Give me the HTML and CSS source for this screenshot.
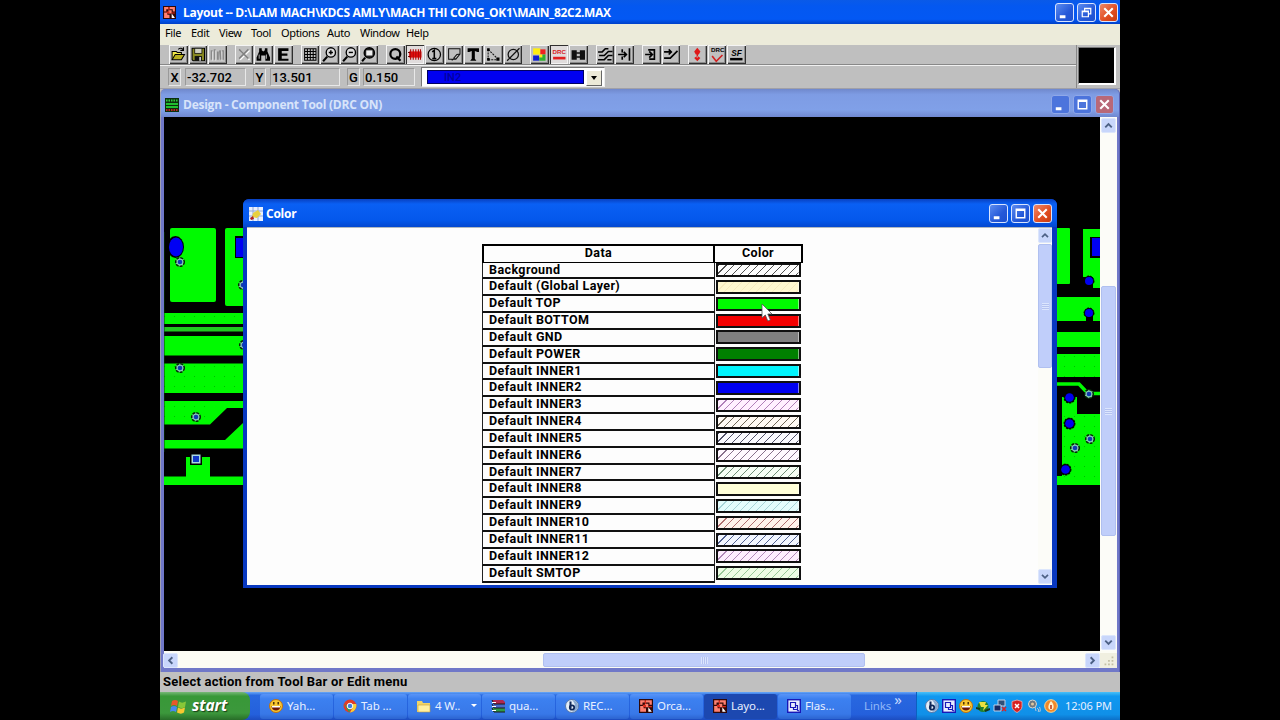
FILE: index.html
```html
<!DOCTYPE html>
<html lang="en">
<head>
    <meta charset="UTF-8">
    <title>Layout</title>
    <link rel="stylesheet" href="styles.css">
</head>
<body>
<!-- shared icons -->
<svg width="0" height="0" class="defs">
    <defs>
        <symbol id="orcad" viewBox="0 0 12 12">
            <rect width="12" height="12" fill="#300808"/>
            <path d="M1 1h4v2H3v2H1zM6 1h5v4H9V3H6zM1 6h3v2h2v3H1zM5 4h3v3H5z" fill="#ff8070"/>
            <path d="M3 5h3v2H4zM8 6h3v1H8zM5 1h1v3H5z" fill="#e02818"/>
            <path d="M8 7l3 4H8z" fill="#fff"/>
        </symbol>
        <symbol id="smile" viewBox="0 0 14 14">
            <circle cx="7" cy="7" r="6.5" fill="#f8c830" stroke="#c07010"/>
            <path d="M2.500 7h9c0 6-9 6-9 0z" fill="#701808"/>
            <path d="M3 7h8v1.500H3z" fill="#fff"/>
            <path d="M4.800 3v2.500M9.200 3v2.500" stroke="#301800" stroke-width="1.300"/>
        </symbol>
        <symbol id="bball" viewBox="0 0 14 14">
            <circle cx="7" cy="7" r="6.500" fill="#e4eef8" stroke="#5878a8"/>
            <path d="M7 1a6 6 0 0 1 0 12c4-3 4-8 0-12z" fill="#88a8d0"/>
            <path d="M5.500 2.500v7" stroke="#102858" stroke-width="2"/>
            <circle cx="7" cy="8.500" r="2.200" fill="none" stroke="#102858" stroke-width="1.800"/>
        </symbol>
        <symbol id="flash" viewBox="0 0 14 14">
            <rect x=".7" y=".7" width="12.600" height="12.600" fill="#e8ecff" stroke="#1818b8" stroke-width="1.400"/>
            <path d="M3.500 3.500h5v5h-5zM8.500 6.500h2v4h-4v-2M10 11l2 1" fill="none" stroke="#1818b8" stroke-width="1.200"/>
        </symbol>
        <symbol id="min" viewBox="0 0 18 18"><path d="M4 12h6v3H4z" fill="#fff"/></symbol>
        <symbol id="max" viewBox="0 0 18 18"><path d="M4.500 4.500h9v9h-9zM4 5.500h10" fill="none" stroke="#fff" stroke-width="1.500"/></symbol>
        <symbol id="restore" viewBox="0 0 18 18"><path d="M7 7V4.500h6.500v6H11M4.500 7.500h6.500v6H4.500zM7 5h6.500M4.500 8h6.500" fill="none" stroke="#fff" stroke-width="1.300"/></symbol>
        <symbol id="close" viewBox="0 0 18 18"><path d="M4.500 4.500l9 9M13.500 4.500l-9 9" stroke="#fff" stroke-width="2.200"/></symbol>
        <symbol id="up" viewBox="0 0 14 14"><path d="M3.500 9L7 5.500 10.500 9" fill="none" stroke="#4d6185" stroke-width="2"/></symbol>
        <symbol id="down" viewBox="0 0 14 14"><path d="M3.500 5L7 8.500 10.500 5" fill="none" stroke="#4d6185" stroke-width="2"/></symbol>
        <symbol id="left" viewBox="0 0 14 14"><path d="M9 3.500L5.500 7 9 10.500" fill="none" stroke="#4d6185" stroke-width="2"/></symbol>
        <symbol id="right" viewBox="0 0 14 14"><path d="M5 3.500L8.500 7 5 10.500" fill="none" stroke="#4d6185" stroke-width="2"/></symbol>
        <symbol id="pad" viewBox="0 0 12 12">
            <circle cx="6" cy="6" r="4.300" fill="#88c8b8" stroke="#042804" stroke-width="1.500" stroke-dasharray="3 1"/>
            <circle cx="6" cy="6" r="2.300" fill="#1038b0"/>
        </symbol>
        <symbol id="blob" viewBox="0 0 12 12">
            <circle cx="6" cy="6" r="5" fill="#000" stroke="#000" stroke-dasharray="2 1"/>
            <circle cx="6" cy="6" r="4" fill="#0000f0"/>
        </symbol>
        <pattern id="dots" width="10" height="10" patternUnits="userSpaceOnUse"><rect x="4" y="6" width="1" height="1" fill="#00c000"/></pattern>
    </defs>
</svg>

<div class="screen">
    <div class="titlebar">
        <svg class="app-icon"><use href="#orcad"/></svg>
        <span class="title">Layout -- D:\LAM MACH\KDCS AMLY\MACH THI CONG_OK1\MAIN_82C2.MAX</span>
        <div class="controls">
            <svg class="ctl"><use href="#min"/></svg>
            <svg class="ctl"><use href="#restore"/></svg>
            <svg class="ctl red"><use href="#close"/></svg>
        </div>
    </div>

    <div class="menu">
        <span class="m-file">File</span><span class="m-edit">Edit</span><span class="m-view">View</span><span class="m-tool">Tool</span><span class="m-options">Options</span><span class="m-auto">Auto</span><span class="m-window">Window</span><span>Help</span>
    </div>

    <div class="tools">
        <div class="tool-rows">
            <div class="toolbar">
                <div class="group">
                    <svg class="btn" viewBox="0 0 18 18"><path d="M3 14V6h4l1 1h4v2" fill="#f0e848" stroke="#000"/><path d="M3 14l3-5h9l-3 5z" fill="#b8b020" stroke="#000"/><path d="M9 4c2-2 4-1 5 1M14 2v3h-3" fill="none" stroke="#000"/></svg>
                    <svg class="btn" viewBox="0 0 18 18"><path d="M3 3h12v12H4l-1-1z" fill="#888820" stroke="#000"/><path d="M5.500 3h7v5h-7z" fill="#d0d0c0" stroke="#000" stroke-width=".7"/><path d="M5.500 10.500h7V15h-7z" fill="#111"/><path d="M10 11.500h1.500V15H10z" fill="#ddd"/></svg>
                    <svg class="btn" viewBox="0 0 18 18"><path d="M3.500 5v9M6.500 4v10M9.500 6v8M11.500 5l1 9M14.500 5v9" stroke="#888" stroke-width="1.800"/><path d="M4.500 6v9M7.500 5v10M13.500 6v9" stroke="#eee" stroke-width=".8"/></svg>
                </div>
                <div class="group">
                    <svg class="btn" viewBox="0 0 18 18"><path d="M5 5l9 9M14 5l-9 9" stroke="#fff" stroke-width="1.400"/><path d="M4 4l9 9M13 4l-9 9" stroke="#808080" stroke-width="1.500"/></svg>
                    <svg class="btn" viewBox="0 0 18 18"><path d="M5 3h2.500v2L9 6l1.500-1V3H13v3l2.500 6v3H11v-5H7v5H2.500v-3L5 6z" fill="#000"/><path d="M5 9v4M12 9v4" stroke="#aaa"/></svg>
                    <svg class="btn" viewBox="0 0 18 18"><path d="M4 3h10v2.500H7.500V8H13v2.300H7.500v2.700H14V15H4z" fill="#000"/></svg>
                </div>
                <div class="group">
                    <svg class="btn" viewBox="0 0 18 18"><path d="M3.500 3.500h11v11h-11zM6.200 3v12M9 3v12M11.800 3v12M3 6.200h12M3 9h12M3 11.800h12" fill="none" stroke="#000"/></svg>
                    <svg class="btn" viewBox="0 0 18 18"><circle cx="10.500" cy="7" r="4.500" fill="#ddd" stroke="#000" stroke-width="1.300"/><path d="M8.500 7h4M10.500 5v4" stroke="#000" stroke-width="1.400"/><path d="M7 11l-4 4.500" stroke="#000" stroke-width="2"/></svg>
                    <svg class="btn" viewBox="0 0 18 18"><circle cx="10.500" cy="7" r="4.500" fill="#ddd" stroke="#000" stroke-width="1.300"/><path d="M8.500 7h4" stroke="#000" stroke-width="1.400"/><path d="M7 11l-4 4.500" stroke="#000" stroke-width="2"/></svg>
                    <svg class="btn" viewBox="0 0 18 18"><circle cx="10" cy="7.500" r="5" fill="#202020" stroke="#000" stroke-width="1.300"/><path d="M7 5h6v5H7z" fill="#eee"/><path d="M6 12l-3 3.500" stroke="#000" stroke-width="2"/></svg>
                </div>
                <div class="group">
                    <svg class="btn" viewBox="0 0 18 18"><circle cx="9" cy="8.500" r="4.800" fill="none" stroke="#000" stroke-width="2.200"/><path d="M10 11l4 4" stroke="#000" stroke-width="2.200"/></svg>
                    <svg class="btn on" viewBox="0 0 18 18"><path d="M3 6h12v6H3z" fill="#e81010"/><path d="M4.500 4v10M7 4v10M9.500 4v10M12 4v10M14 4v10" stroke="#b00808" stroke-width="1.100"/><path d="M2 7h2M2 11h2" stroke="#600"/></svg>
                    <svg class="btn" viewBox="0 0 18 18"><circle cx="9" cy="9" r="6" fill="none" stroke="#000" stroke-width="1.200"/><path d="M7 6.500L9 5v8M7 13h4" fill="none" stroke="#000" stroke-width="1.500"/></svg>
                    <svg class="btn" viewBox="0 0 18 18"><path d="M8.500 13.500h-5v-10h11v5l-4 5zM8.500 13.500l-2 1M10.500 13.500l-2-1 3-3.500 3-.5" fill="none" stroke="#111"/></svg>
                    <svg class="btn" viewBox="0 0 18 18"><path d="M3.500 3h11v3.500H13L10.500 5.500V13l1.500 2H6l1.500-2V5.500L5 6.500H3.500z" fill="#000"/></svg>
                    <svg class="btn" viewBox="0 0 18 18"><path d="M4 4v10M4 4l9 9M4 14h9" fill="none" stroke="#111" stroke-dasharray="2 1"/><path d="M3 3h2.500v2.500H3zM3 12.500h2.500V15H3zM12 12h3v3h-3z" fill="#000"/></svg>
                    <svg class="btn" viewBox="0 0 18 18"><circle cx="9" cy="9" r="5" fill="none" stroke="#111" stroke-width="1.200"/><path d="M3 15L15 3" stroke="#111" stroke-width="1.200"/></svg>
                </div>
                <div class="group">
                    <svg class="btn" viewBox="0 0 18 18"><path d="M3 3h7v6H3z" fill="#ffee10"/><path d="M10 4h5v5h-5z" fill="#f02020"/><path d="M3 10h6v5H3z" fill="#1020d0"/><path d="M9 9h3v3H9z" fill="#ffee10"/><path d="M12 9h3v6H9v-3h3z" fill="#30b030"/></svg>
                    <svg class="btn on" viewBox="0 0 18 18"><text x="2.500" y="8.500" class="drc red-t">DRC</text><path d="M3 12.500h12" stroke="#e02020" stroke-width="2.600"/></svg>
                    <svg class="btn" viewBox="0 0 18 18"><path d="M2.500 5h5v9h-5zM10.500 5h5v9h-5z" fill="#111"/><path d="M7 7.500h4M7 11.500h4" stroke="#111" stroke-width="1.400"/></svg>
                </div>
                <div class="group">
                    <svg class="btn" viewBox="0 0 18 18"><path d="M2 6.500h4l3-3h3M3 10h5l4-4h4M2 14h6l4-4h4M11 14h4" fill="none" stroke="#000" stroke-width="1.500"/></svg>
                    <svg class="btn" viewBox="0 0 18 18"><path d="M3 9h8M8.500 6.500L11 9l-2.500 2.500M14 3v12M7 4v3M7 11v3" fill="none" stroke="#000" stroke-width="1.600"/></svg>
                </div>
                <div class="group">
                    <svg class="btn" viewBox="0 0 18 18"><path d="M3 9h6M7 6l3 3-3 3M6 4.500h6v9H7" fill="none" stroke="#000" stroke-width="1.600"/></svg>
                    <svg class="btn" viewBox="0 0 18 18"><path d="M2 6.500h7M6.500 4L9 6.500 6.500 9M2 12.500h6l7-7" fill="none" stroke="#000" stroke-width="1.600"/></svg>
                </div>
                <div class="group">
                    <svg class="btn" viewBox="0 0 18 18"><path d="M9 2.500l3 3.500-1.500 3h-3L6 6z" fill="#e01818"/><path d="M9 15.500l3-3-2-1.500H8l-2 1.500zM8.300 8h1.400v4H8.300z" fill="#e01818"/></svg>
                    <svg class="btn" viewBox="0 0 18 18"><text x="3" y="7" class="drc">DRC</text><path d="M4 10.500l4 5 6-6" fill="none" stroke="#d02020" stroke-width="1.600"/></svg>
                    <svg class="btn" viewBox="0 0 18 18"><text x="4" y="10" class="sf">SF</text><path d="M3 13.500h12" stroke="#000" stroke-width="2.400"/></svg>
                </div>
            </div>
            <div class="coords">
                <span class="lbl">X</span><span class="val v-x">-32.702</span>
                <span class="lbl">Y</span><span class="val v-y">13.501</span>
                <span class="lbl">G</span><span class="val v-g">0.150</span>
                <div class="combo">
                    <span class="layer">IN2</span>
                    <span class="drop"></span>
                </div>
            </div>
        </div>
        <div class="preview"></div>
    </div>

    <div class="mdi">
        <div class="design">
            <div class="design-title">
                <svg class="design-icon" viewBox="0 0 14 14"><rect width="14" height="14" fill="#0c300c"/><path d="M1 6h12M1 9h12" stroke="#20c030" stroke-width="2"/><path d="M1 2.500h12" stroke="#30d040" stroke-width="2" stroke-dasharray="1.500 1"/><path d="M1 12h12" stroke="#c02020" stroke-width="2" stroke-dasharray="1.500 1"/></svg>
                <span class="title">Design - Component Tool (DRC ON)</span>
                <div class="controls">
                    <svg class="ctl"><use href="#min"/></svg>
                    <svg class="ctl"><use href="#max"/></svg>
                    <svg class="ctl red"><use href="#close"/></svg>
                </div>
            </div>
            <div class="work">
                <svg class="board" width="936" height="534" viewBox="164 117 936 534">
                    <g id="copper" fill="#00fa00">
                        <rect x="170" y="228" width="46" height="74" rx="2"/>
                        <rect x="225" y="228" width="20" height="78" rx="2"/>
                        <rect x="164" y="313" width="82" height="11"/>
                        <rect x="164" y="327" width="82" height="4.500" fill="#20c820"/>
                        <rect x="164" y="336" width="82" height="19.500"/>
                        <rect x="164" y="363.500" width="82" height="29.500"/>
                        <path d="M164 401h82v7h-19l-17 16.500h-46z"/>
                        <path d="M164 440h61l18-17h3v25.500h-82z"/>
                        <path d="M186 457h24v19.500h36v8.500h-82v-8.500h22z"/>
                        <rect x="1050" y="228" width="20" height="56" rx="1"/>
                        <path d="M1083 229h17v59h-7v-11h-10z"/>
                        <rect x="1050" y="297" width="50" height="24"/>
                        <rect x="1050" y="332" width="50" height="15"/>
                        <rect x="1050" y="354" width="50" height="23"/>
                        <path d="M1062 397h15v17h23v71h-50v-9h12z"/>
                        <path d="M1050 384h29l9 9.500h12" fill="none" stroke="#00fa00" stroke-width="3.500"/>
                    </g>
                    <path d="M164 313h82v11h-82zM164 364h82v29h-82zM164 401h46v23h-46zM1050 354h50v23h-50zM1064 414h36v71h-36z" fill="url(#dots)"/>
                    <path d="M164 232v220" stroke="#064006"/>
                    <!-- component pads -->
                    <ellipse cx="175.500" cy="247" rx="8.500" ry="11"/>
                    <ellipse cx="176" cy="247" rx="7" ry="9.500" fill="#0000f4"/>
                    <path d="M235 236h10v22h-10z"/>
                    <path d="M236 238h10v19h-10z" fill="#0000f4"/>
                    <path d="M1090 237h10v21h-10z"/>
                    <path d="M1092 238h8v18h-8z" fill="#0000f4"/>
                    <use href="#pad" x="174" y="256" width="12" height="12"/>
                    <use href="#pad" x="237" y="279" width="12" height="12"/>
                    <use href="#pad" x="238" y="339" width="12" height="12"/>
                    <use href="#pad" x="174" y="362" width="12" height="12"/>
                    <use href="#pad" x="190" y="411" width="12" height="12"/>
                    <path d="M190 453h12v12h-12z"/>
                    <path d="M191.500 454.500h9v9h-9z" fill="#a8d8e0"/>
                    <path d="M193 456h6v6h-6z" fill="#1038c8"/>
                    <use href="#blob" x="1083" y="275" width="12" height="12"/>
                    <path d="M1086 314h7v8h-7z"/>
                    <use href="#blob" x="1083" y="307" width="12" height="12"/>
                    <use href="#blob" x="1063" y="391" width="13" height="13"/>
                    <use href="#blob" x="1063" y="417" width="13" height="13"/>
                    <use href="#blob" x="1059" y="463" width="13" height="13"/>
                    <use href="#pad" x="1083" y="388" width="12" height="12"/>
                    <use href="#pad" x="1084" y="433" width="12" height="12"/>
                    <use href="#pad" x="1069" y="442" width="12" height="12"/>
                </svg>
                <div class="vscroll">
                    <svg class="sb"><use href="#up"/></svg>
                    <div class="thumb"></div>
                    <svg class="sb"><use href="#down"/></svg>
                </div>
            </div>
            <div class="hscroll">
                <svg class="sb"><use href="#left"/></svg>
                <div class="thumb"></div>
                <svg class="sb"><use href="#right"/></svg>
                <svg class="grip" viewBox="0 0 17 17"><path d="M12 4h2v2h-2zM8 8h2v2H8zM12 8h2v2h-2zM4 12h2v2H4zM8 12h2v2H8zM12 12h2v2h-2z" fill="#c4c0a4"/></svg>
            </div>
        </div>

        <div class="color-win">
            <div class="color-title">
                <svg class="color-icon" viewBox="0 0 14 14"><rect width="14" height="14" fill="#e8f0ff"/><path d="M0 4h14M0 9h14M4 0v14M9 0v14" stroke="#90a8d8"/><path d="M4 6l5-3 3 4-4 4-5-1z" fill="#e8d040"/><path d="M1 11l3-2 1 3-3 1z" fill="#b02020"/></svg>
                <span class="title">Color</span>
                <div class="controls">
                    <svg class="ctl"><use href="#min"/></svg>
                    <svg class="ctl"><use href="#max"/></svg>
                    <svg class="ctl red"><use href="#close"/></svg>
                </div>
            </div>
            <div class="color-body">
                <div class="sheet">
                    <div class="head"><span class="h-data">Data</span><span class="h-color">Color</span></div>
                    <div class="row"><span class="name">Background</span><span class="swatch hatch black"></span></div>
                    <div class="row"><span class="name">Default (Global Layer)</span><span class="swatch hatch global"></span></div>
                    <div class="row"><span class="name">Default TOP</span><span class="swatch top"></span></div>
                    <div class="row"><span class="name">Default BOTTOM</span><span class="swatch bottom"></span></div>
                    <div class="row"><span class="name">Default GND</span><span class="swatch gnd"></span></div>
                    <div class="row"><span class="name">Default POWER</span><span class="swatch power"></span></div>
                    <div class="row"><span class="name">Default INNER1</span><span class="swatch inner1"></span></div>
                    <div class="row"><span class="name">Default INNER2</span><span class="swatch inner2"></span></div>
                    <div class="row"><span class="name">Default INNER3</span><span class="swatch hatch inner3"></span></div>
                    <div class="row"><span class="name">Default INNER4</span><span class="swatch hatch inner4"></span></div>
                    <div class="row"><span class="name">Default INNER5</span><span class="swatch hatch inner5"></span></div>
                    <div class="row"><span class="name">Default INNER6</span><span class="swatch hatch inner6"></span></div>
                    <div class="row"><span class="name">Default INNER7</span><span class="swatch hatch inner7"></span></div>
                    <div class="row"><span class="name">Default INNER8</span><span class="swatch inner8"></span></div>
                    <div class="row"><span class="name">Default INNER9</span><span class="swatch hatch inner9"></span></div>
                    <div class="row"><span class="name">Default INNER10</span><span class="swatch hatch inner10"></span></div>
                    <div class="row"><span class="name">Default INNER11</span><span class="swatch hatch inner11"></span></div>
                    <div class="row"><span class="name">Default INNER12</span><span class="swatch hatch inner12"></span></div>
                    <div class="row"><span class="name">Default SMTOP</span><span class="swatch hatch smtop"></span></div>
                </div>
                <div class="vscroll small">
                    <svg class="sb"><use href="#up"/></svg>
                    <div class="thumb"></div>
                    <svg class="sb"><use href="#down"/></svg>
                </div>
            </div>
        </div>
    </div>

    <div class="status">Select action from Tool Bar or Edit menu</div>

    <div class="taskbar">
        <div class="start">
            <svg class="flag" viewBox="0 0 18 17"><path d="M2 3c2-1.500 4-1.500 6 0L7 8C5 6.500 3 6.500 1 8z" fill="#e85828"/><path d="M9 3.500c2 1.500 4 1.500 7 0L15 9c-2 1.500-4 1.500-7 0z" fill="#88c838"/><path d="M1 9c2-1.500 4-1.500 6 0l-1 5c-2-1.500-4-1.500-6 0z" fill="#4888f0"/><path d="M8 9.500c2 1.500 4 1.500 7 0l-1 5c-2 1.500-4 1.500-7 0z" fill="#f8c830"/></svg>
            <span>start</span>
        </div>
        <div class="tasks">
            <div class="task"><svg><use href="#smile"/></svg><span>Yah...</span></div>
            <div class="task"><svg viewBox="0 0 14 14"><circle cx="7" cy="7" r="6.500" fill="#e03c28"/><path d="M1 4.500L6 13.500l2-4-5-3z" fill="#38a048"/><path d="M8 5h5.200c1 4-2 8.500-6.200 8.500L10 8z" fill="#f8d038"/><circle cx="7" cy="7" r="2.800" fill="#4080e0" stroke="#fff"/></svg><span>Tab ...</span></div>
            <div class="task folder"><svg viewBox="0 0 14 14"><path d="M0 2h5l1 2h7v9H0z" fill="#f0d468"/><path d="M1 6h12v7H1z" fill="#fff0a0" stroke="#c8a038" stroke-width=".6"/></svg><span>4 W..</span><i class="more"></i></div>
            <div class="task"><svg viewBox="0 0 14 14"><path d="M1 1h11l2 2v2H3z" fill="#b02850"/><path d="M1 5h11l2 1v3H3z" fill="#4868c8"/><path d="M1 9h11l2 1v3H3z" fill="#309848"/><path d="M1 1l2 4M1 5l2 4M1 9l2 4M3 5h11M3 9h11M3 13h11" stroke="#181818"/><path d="M1 3.500h4M1 7.500h4M1 11.500h4" stroke="#fff"/></svg><span>qua...</span></div>
            <div class="task"><svg><use href="#bball"/></svg><span>REC...</span></div>
            <div class="task"><svg><use href="#orcad"/></svg><span>Orca...</span></div>
            <div class="task active"><svg><use href="#orcad"/></svg><span>Layo...</span></div>
            <div class="task"><svg><use href="#flash"/></svg><span>Flas...</span></div>
        </div>
        <div class="links">Links<span class="chev">»</span></div>
        <div class="tray">
            <svg><use href="#bball"/></svg>
            <svg><use href="#flash"/></svg>
            <svg><use href="#smile"/></svg>
            <svg viewBox="0 0 14 14"><circle cx="7" cy="7.500" r="5.500" fill="#208030"/><path d="M3 3h7l-1 3h3l-5 6 1-4H5z" fill="#e8e040"/><path d="M0 9l4 1M9 12l5-2" stroke="#183818" stroke-width="2"/></svg>
            <svg viewBox="0 0 14 14"><path d="M5 1h7v6H5z" fill="#305078" stroke="#c0d0e8"/><path d="M1 6h7v6H1z" fill="#182860" stroke="#c0d0e8"/><path d="M9 8l4 4M13 8l-4 4" stroke="#e02020" stroke-width="1.500"/></svg>
            <svg viewBox="0 0 14 14"><path d="M7 1l5 1.500v5c0 3-3 5-5 6-2-1-5-3-5-6v-5z" fill="#d82020" stroke="#f0b0b0" stroke-width=".8"/><path d="M5 5l4 4M9 5L5 9" stroke="#fff" stroke-width="1.500"/></svg>
            <svg viewBox="0 0 14 14"><circle cx="5.500" cy="5" r="4" fill="#707880" stroke="#d8d8d0"/><circle cx="5.500" cy="5" r="1.500" fill="#e0c8a0"/><path d="M8 8l1 4M10 9c2 1 2 3 1 4M12.500 8c1 2 1 4 0 5" fill="none" stroke="#b8c8d8"/></svg>
            <svg viewBox="0 0 14 14"><circle cx="7" cy="7" r="6.300" fill="#f08828" stroke="#ffd890"/><path d="M7 2c4 4 3 9 0 9S3 7 7 2z" fill="#fff0c8"/><path d="M7 6v4" stroke="#c03010" stroke-width="1.500"/></svg>
            <span class="clock">12:06 PM</span>
        </div>
    </div>

    <svg class="cursor" viewBox="0 0 13 20"><path d="M1 1v14l3.300-3 2.500 6 2.600-1-2.600-6H11z" fill="#fff" stroke="#505050" stroke-width=".8"/></svg>
</div>
</body>
</html>
```

FILE: styles.css
```css
* { box-sizing: border-box; }
body { margin: 0; background: #000; overflow: hidden; }
.defs { position: absolute; }
.screen { position: relative; width: 960px; height: 720px; margin: 0 auto; display: flex; flex-direction: column; background: #c0c0c0; }

/* title bars */
.titlebar { height: 24px; padding: 0 2px 0 3px; display: flex; align-items: center; background: linear-gradient(#0a5ae8, #0458f0 25%, #0358f4 80%, #0040c8); }
.title { font: bold 12px "Open Sans", sans-serif; color: #fff; white-space: pre; letter-spacing: -0.25px; }
.titlebar .title { margin-left: 7px; letter-spacing: -0.3px; }
.app-icon { width: 13px; height: 13px; }
.controls { margin-left: auto; display: flex; gap: 3px; }
.ctl { width: 19px; height: 19px; border: 1px solid #d8e4ff; border-radius: 3px; background: linear-gradient(135deg, #5c8cf0, #2458d8 60%, #1c50d0); }
.ctl.red { background: linear-gradient(135deg, #f08868, #e04c20 60%, #c83c10); }

.menu { height: 21px; display: flex; padding-left: 5px; background: #ecebda; font: 11px/18px "Noto Sans", sans-serif; color: #000; letter-spacing: -0.35px; }
.m-file { width: 26px; }
.m-edit { width: 28px; }
.m-view { width: 32px; }
.m-tool { width: 30px; }
.m-options { width: 46px; }
.m-auto { width: 33px; }
.m-window { width: 46px; }

/* toolbar */
.tools { height: 44px; display: flex; background: #bfbfbf; border-bottom: 1px solid #a0a0a8; }
.tool-rows { width: 917px; border-right: 1px solid #888; }
.toolbar { height: 20px; padding-left: 9px; display: flex; gap: 8px; }
.group { display: flex; gap: 1px; }
.btn { width: 18.6px; height: 19px; background: #c0c0c0; box-shadow: inset 1px 1px #f4f4f4, inset -1px -1px #303030, inset -2px -2px #8c8c8c; }
.btn.on { background: #e0dcdc; box-shadow: inset 1px 1px #303030, inset -1px -1px #f4f4f4; }
.drc { font: bold 6px "Liberation Sans", sans-serif; fill: #000; }
.red-t { fill: #d82020; }
.sf { font: italic bold 8px "Liberation Sans", sans-serif; fill: #000; }
.coords { height: 23px; padding: 2px 0 0 8px; display: flex; border-top: 1px solid #f0f0f0; box-shadow: 0 -1px #888; font: 500 13px/17px Roboto, sans-serif; letter-spacing: 0; color: #000; }
.lbl { width: 13px; height: 18px; text-align: center; border: 1px solid; border-color: #999 #e8e8e8 #e8e8e8 #999; }
.val { height: 18px; padding-left: 1px; margin: 0 7px 0 4px; border: 1px solid; border-color: #999 #e8e8e8 #e8e8e8 #999; }
.v-x { width: 61px; }
.v-y { width: 70px; }
.v-g { width: 52px; margin-left: 3px; margin-right: 6px; }
.combo { width: 184px; height: 20px; margin-top: -1px; padding: 2px 2px 2px 5px; display: flex; justify-content: space-between; background: #fff; border: 1px solid; border-color: #777 #eee #eee #777; }
.layer { width: 157px; height: 14px; padding-left: 16px; background: #0000f0; color: #0000a0; font-size: 11px; line-height: 14px; border: 1px solid #000060; }
.drop { width: 16px; height: 16px; background: #ece9d8; border: 1px solid; border-color: #fff #666 #666 #fff; display: flex; align-items: center; justify-content: center; }
.drop::after { content: ""; border: 3.5px solid transparent; border-top: 4px solid #000; border-bottom: 0; }
.preview { width: 38px; height: 38px; margin: 2px 0 0 1px; background: #000; border: 1px solid; border-color: #777 #fff #fff #777; border-right-width: 2px; border-bottom-width: 2px; }

/* design window */
.mdi { position: relative; height: 583px; }
.design { height: 583px; padding: 0 3px 4px; background: #7078c8; border-left: 1px solid #a0a0b0; border-right: 1px solid #5860b0; border-radius: 5px 5px 0 0; }
.design-title { height: 28px; margin: 0 -3px; padding: 3px 5px 0 4px; display: flex; align-items: center; border-radius: 5px 5px 0 0; background: linear-gradient(#7088cc, #7e9ce4 20%, #80a0e8 75%, #7088d0); }
.design-title .title { margin-left: 4px; color: #d8e4fa; }
.design-icon { width: 14px; height: 14px; }
.design-title .ctl { border-color: #90a8e8; background: #4c74dc; }
.design-title .ctl.red { background: #b86878; }
.work { height: 534px; display: flex; }
.board { display: block; flex: none; background: #000; }
.vscroll { width: 17px; padding: 1px; display: flex; flex-direction: column; background: #fcfcf8; }
.sb { width: 15px; height: 15px; flex: none; background: #c8d6fb; border: 1px solid #dce6fc; border-radius: 2px; }
.thumb { background: #c0cefa; border: 1px solid #b0c0f0; border-radius: 2px; display: flex; align-items: center; justify-content: center; }
.thumb::after { content: ""; width: 7px; height: 7px; background: repeating-linear-gradient(#dce6fe 0 1px, #b4c2f0 1px 2px); }
.vscroll .thumb { height: 250px; margin-top: 153px; }
.vscroll .sb:last-child { margin-top: auto; }
.hscroll { width: 953px; height: 17px; padding: 2px 0 0; display: flex; background: #fcfcf4; }
.hscroll .sb:first-child { margin-left: -1px; }
.hscroll .thumb { width: 322px; height: 14px; margin-left: 365px; }
.hscroll .thumb::after { background: repeating-linear-gradient(90deg, #dce6fe 0 1px, #b4c2f0 1px 2px); }
.hscroll .sb:nth-child(3) { margin-left: auto; }
.grip { width: 17px; height: 15px; background: #f0efe0; }

/* color window floats over the board */
.color-win { position: absolute; left: 83px; top: 110px; width: 814px; height: 389px; padding: 0 5px 3px 4px; background: #0838c0; border-radius: 6px 6px 0 0; display: flex; flex-direction: column; }
.color-title { height: 28px; margin: 0 -5px 0 -4px; padding: 1px 5px 0 6px; display: flex; align-items: center; border-radius: 6px 6px 0 0; background: linear-gradient(#0840c0, #0a60f4 18%, #0458ec 75%, #0448d0); }
.color-title .title { margin-left: 3px; }
.color-icon { width: 14px; height: 14px; }
.color-body { flex: 1; padding-left: 235px; display: flex; justify-content: space-between; background: #fdfdfd; border-top: 1px solid #b0b8c0; }
.sheet { padding-top: 16px; width: 321px; font: bold 12.5px/14px Roboto, sans-serif; letter-spacing: 0.4px; color: #000; }
.head { height: 18.5px; display: flex; border: 2px solid #000; border-bottom: 1px solid #000; text-align: center; }
.h-data { width: 231px; border-right: 2px solid #000; }
.h-color { flex: 1; }
.row { height: 16.85px; display: flex; align-items: flex-start; }
.name { width: 233px; height: 16.85px; padding-left: 6px; border: 1px solid #222; border-top: 0; border-bottom: 2px solid #111; }
.swatch { width: 85px; height: 14px; margin: 0.5px 0 0 1px; border: 2px solid #101010; box-shadow: inset -1px 0 rgba(255, 255, 255, 0.5); }
.hatch { background-image: repeating-linear-gradient(135deg, var(--line) 0 0.8px, transparent 0.8px 5.6px); }
.black { --line: #505050; }
.global { --line: #f8ecc0; background-color: #fff8d0; }
.top { background-color: #00fa00; }
.bottom { background-color: #f40000; }
.gnd { background-color: #808080; }
.power { background-color: #008000; }
.inner1 { background-color: #00f4fc; }
.inner2 { background-color: #0000f0; }
.inner3 { --line: #b080b8; background-color: #fff0ff; }
.inner4 { --line: #706858; background-color: #fffaf4; }
.inner5 { --line: #505068; background-color: #fafaff; }
.inner6 { --line: #88708c; background-color: #fff8ff; }
.inner7 { --line: #709078; background-color: #f6fff6; }
.inner8 { background-color: #ffffd8; }
.inner9 { --line: #a8d4d8; background-color: #e4fcfc; }
.inner10 { --line: #b07070; background-color: #fff2ec; }
.inner11 { --line: #506090; background-color: #f2f6ff; }
.inner12 { --line: #b088b8; background-color: #fdeefe; }
.smtop { --line: #98c898; background-color: #ecfce4; }
.vscroll.small { width: 14px; padding: 0; }
.small .sb { width: 14px; height: 15px; }
.small .thumb { width: 14px; height: 124px; margin-top: 1px; }
.small .sb:last-child { margin-bottom: 1px; }
.cursor { position: absolute; left: 601px; top: 303px; width: 13px; height: 20px; }

.status { height: 20px; padding-left: 3px; font: bold 13px/19px Roboto, sans-serif; letter-spacing: 0.23px; color: #000; }

/* taskbar */
.taskbar { height: 28px; display: flex; background: linear-gradient(#68a8f8, #2868e0 12%, #2460dc 80%, #1c4cc0); font: 11.5px "Noto Sans", sans-serif; color: #e8f0ff; letter-spacing: -0.1px; }
.start { width: 90px; display: flex; align-items: center; padding-left: 10px; gap: 4px; border-radius: 0 8px 8px 0; background: linear-gradient(#78b878, #389838 15%, #3c983c 75%, #286c28); color: #fff; font: italic bold 15.5px "Open Sans", sans-serif; text-shadow: 1px 1px 1px #184018; }
.start span { margin-top: -2px; }
.flag { width: 18px; height: 17px; }
.tasks { display: flex; gap: 1px; padding: 2px 0 1px 10px; }
.task { width: 73px; display: flex; align-items: center; gap: 4px; padding: 0 0 2px 9px; border-radius: 3px; background: linear-gradient(#5894f8, #3c80f0 20%, #3878e8 80%, #2c64d0); white-space: pre; }
.task svg { width: 14px; height: 14px; flex: none; }
.task.active { background: #1c48b0; }
.more { margin-left: auto; margin-right: 4px; border: 3px solid transparent; border-top-color: #fff; border-bottom: 0; }
.links { width: 65px; padding: 6px 0 0 13px; color: #90b8f8; display: flex; }
.chev { margin: -9px 0 0 3px; font-size: 15px; color: #c8dcff; }
.tray { flex: 1; padding-left: 8px; display: flex; align-items: center; gap: 3px; background: linear-gradient(#48c0f8, #1098f0 15%, #1090e8 80%, #0c70c8); border-left: 1px solid #0c60c0; }
.tray svg { width: 14px; height: 14px; flex: none; }
.clock { margin: -1px 0 0 4px; font-size: 11px; white-space: pre; }
```
